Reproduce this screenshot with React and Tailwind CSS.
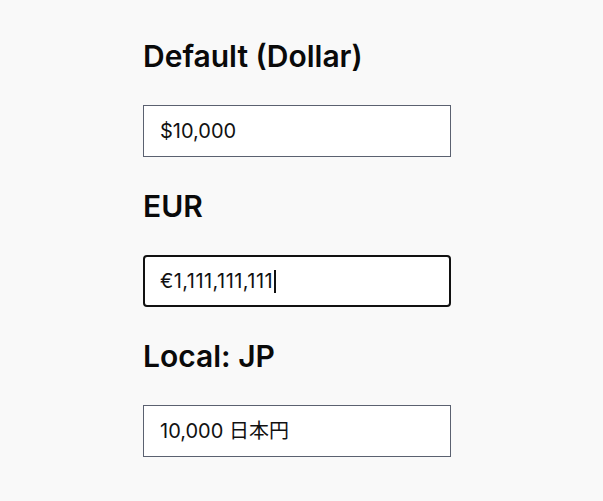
import React from "react";

function Field({ label, children }) {
  return (
    <div className="flex flex-col">
      <h2 className="text-[30px] leading-[36px] font-semibold text-[#0a0a0a] mb-[31px]">{label}</h2>
      {children}
    </div>
  );
}

export default function App() {
  return (
    <div
      className="min-h-[501px] w-full bg-[#f9f9f9] pt-[38px] pl-[143px]"
      style={{ fontFamily: 'Inter, "Noto Sans CJK JP", sans-serif' }}
    >
      <div className="flex w-[308px] flex-col gap-[31px]">
        <Field label="Default (Dollar)">
          <div className="flex h-[52px] items-center border border-[#5b6170] bg-white pl-[16px] text-[20px] text-[#111]">
            $10,000
          </div>
        </Field>
        <Field label="EUR">
          <div className="flex h-[52px] items-center rounded-[4px] border-2 border-[#111] bg-white pl-[15px] text-[20px] text-[#111]">
            <span className="tracking-[0.45px]">€1,111,111,111</span>
            <span className="ml-[1px] inline-block h-[23px] w-[2px] bg-[#111]" />
          </div>
        </Field>
        <Field label="Local: JP">
          <div className="flex h-[52px] items-center border border-[#5b6170] bg-white pl-[16px] text-[20px] text-[#111]">
            10,000 日本円
          </div>
        </Field>
      </div>
    </div>
  );
}
